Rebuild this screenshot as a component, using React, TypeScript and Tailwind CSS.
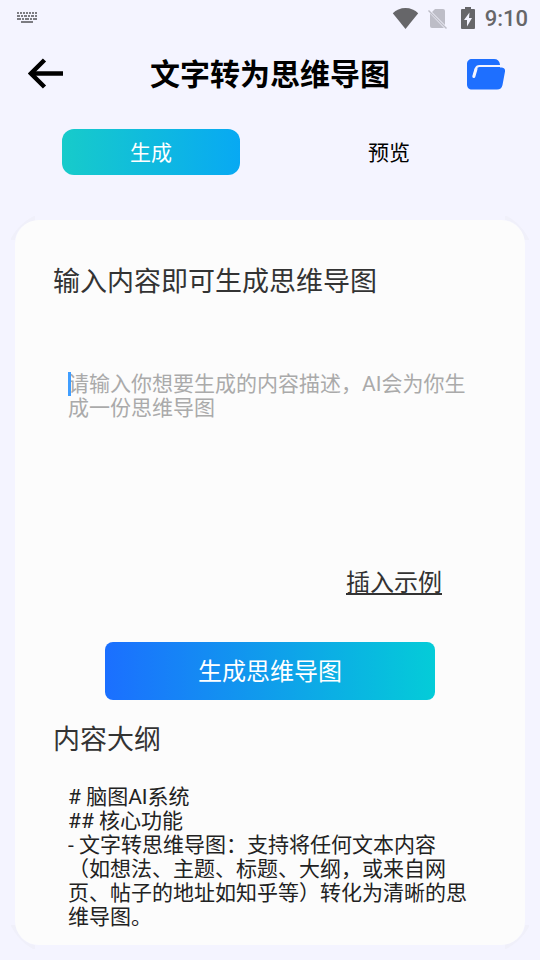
import { useState } from "react";

const OUTLINE = `# 脑图AI系统
## 核心功能
- 文字转思维导图：支持将任何文本内容（如想法、主题、标题、大纲，或来自网页、帖子的地址如知乎等）转化为清晰的思维导图。`;

function KeyboardIcon() {
  return (
    <svg width="20" height="12" viewBox="0 0 20 12" stroke="#7c7c82" fill="none" aria-hidden="true">
      <path d="M0 1h20" strokeWidth="2" strokeDasharray="2 1" />
      <path d="M0 4h20" strokeWidth="2" strokeDasharray="3 1 2 1" />
      <path d="M0 7h20" strokeWidth="2" strokeDasharray="4 1 2 1" />
      <path d="M4 10h12" strokeWidth="2" />
    </svg>
  );
}

function StatusIcons() {
  return (
    <svg width="84" height="24" viewBox="392 5 84 24" fill="#666669" aria-hidden="true">
      <path d="M405.500 28 392.800 12.300C396 9 400.500 7 405.500 7s9.500 2 12.700 5.300z" />
      <path d="M435 8h8a2 2 0 0 1 2 2v14L432 11zM430 12.500 444 27H432a2 2 0 0 1-2-2z" fill="#bdbdc7" />
      <path d="m428.500 9.500 18 18" stroke="#bdbdc7" strokeWidth="1.500" />
      <path d="M462 8h3V6h6v2h3a1 1 0 0 1 1 1v18a1 1 0 0 1-1 1h-12a1 1 0 0 1-1-1V9a1 1 0 0 1 1-1z" />
      <path d="M469.500 11.500 464 19h3v6.500l5-8.500h-3z" fill="#f4f4ff" />
    </svg>
  );
}

function BackIcon() {
  return (
    <svg width="36" height="32" viewBox="0 0 36 32" fill="none" stroke="#000" aria-hidden="true">
      <path d="M16.500 2 3 15.500l13.500 13.500" strokeWidth="4.500" />
      <path d="M3 15.500h32" strokeWidth="4.500" />
    </svg>
  );
}

function FolderIcon() {
  return (
    <svg width="38" height="31" viewBox="0 0 38 31" fill="#1e6fff" aria-hidden="true">
      <path d="M5 0h22c3.500 0 5.500 2 6 5.500v3h1.500c2.500.2 3.900 1.700 3.500 4L35.500 26c-.6 3-2.500 4.500-5.500 4.500H5c-3 0-5-2-5-5V5c0-3 2-5 5-5z" />
      <path d="M6.800 17.500 9 9.500c.5-2 1.500-2.500 3.500-2.500H34" fill="none" stroke="#f4f4ff" strokeWidth="2" />
      <path d="M6.800 17.500 9 10" stroke="#f4f4ff" strokeWidth="3" strokeLinecap="round" />
    </svg>
  );
}

function CornerShade({ className }: { className: string }) {
  return (
    <svg className={"absolute " + className} width="24" height="24" viewBox="0 0 24 24" aria-hidden="true">
      <path d="M0 24V22C6 12 12 6 23 0h1v5C14 6 5 14 4 24z" fill="#f0f0fa" />
    </svg>
  );
}

export default function App() {
  const [tab, setTab] = useState("generate");
  const [prompt, setPrompt] = useState("");
  const [outline, setOutline] = useState(OUTLINE);
  const active = "bg-linear-to-r/srgb from-[#17cbca] to-[#08a9f3] text-white";

  return (
    <div className="flex min-h-screen flex-col bg-[#f4f4ff] font-[Roboto,'Noto_Sans_CJK_SC',sans-serif] text-[#333]">
      <div className="flex h-9 items-center justify-between pr-3 pl-[17px]">
        <KeyboardIcon />
        <div className="flex items-center gap-[9px] text-[22px] leading-6 font-medium text-[#666669]">
          <StatusIcons />
          <time className="pt-0.5">9:10</time>
        </div>
      </div>

      <header className="flex h-[76px] items-center justify-between pr-[35px] pl-7">
        <button type="button" aria-label="返回" className="w-[45px]"><BackIcon /></button>
        <h1 className="pt-0.5 text-[30px] leading-9 font-bold text-black">文字转为思维导图</h1>
        <button type="button" aria-label="文件夹"><FolderIcon /></button>
      </header>

      <nav className="mt-[17px] grid grid-cols-2 gap-[60px] px-[62px] text-[21px] leading-6">
        <button
          type="button"
          onClick={() => setTab("generate")}
          className={"h-[46px] rounded-xl pt-0.5 " + (tab === "generate" ? active : "text-black")}
        >
          生成
        </button>
        <button
          type="button"
          onClick={() => setTab("preview")}
          className={"h-[46px] rounded-xl pt-0.5 " + (tab === "preview" ? active : "text-black")}
        >
          预览
        </button>
      </nav>

      <main className="relative mx-[15px] mt-[45px] mb-[15px] flex grow flex-col">
        <CornerShade className="-top-1 -left-1" />
        <CornerShade className="-top-1 -right-1 rotate-90" />
        <CornerShade className="-right-1 -bottom-1 rotate-180" />
        <CornerShade className="-bottom-1 -left-1 -rotate-90" />
        <div className="relative flex grow flex-col rounded-3xl bg-[#fcfcfc] px-[38px] pt-[42px] pb-4">
          <label htmlFor="prompt" className="text-[27px] leading-10">输入内容即可生成思维导图</label>
          <div className="relative mt-[70px] flex px-[15px]">
            <textarea
              id="prompt"
              value={prompt}
              onChange={(e) => setPrompt(e.target.value)}
              placeholder="请输入你想要生成的内容描述，AI会为你生成一份思维导图"
              className="h-[180px] w-full resize-none overflow-hidden text-[21px] leading-6 outline-none placeholder:text-[#aaa]"
            />
            {prompt === "" && <span className="absolute top-0 left-[15px] h-6 w-[3px] bg-[#409eff]" />}
          </div>
          <button
            type="button"
            onClick={() => setPrompt("脑图AI系统")}
            className="mt-[13px] mr-[45px] self-end text-2xl leading-9 underline"
          >
            插入示例
          </button>
          <button
            type="button"
            className="mx-[52px] mt-[41px] h-[58px] rounded-lg bg-linear-to-r/srgb from-[#1b6fff] to-[#04ccd8] pt-0.5 text-2xl text-white"
          >
            生成思维导图
          </button>
          <label htmlFor="outline" className="mt-5 text-[27px] leading-10">内容大纲</label>
          <div className="mt-[25px] flex px-[15px]">
            <textarea
              id="outline"
              value={outline}
              onChange={(e) => setOutline(e.target.value)}
              className="h-36 w-full resize-none overflow-hidden text-[21px] leading-6 text-[#222] outline-none"
            />
          </div>
        </div>
      </main>
    </div>
  );
}
